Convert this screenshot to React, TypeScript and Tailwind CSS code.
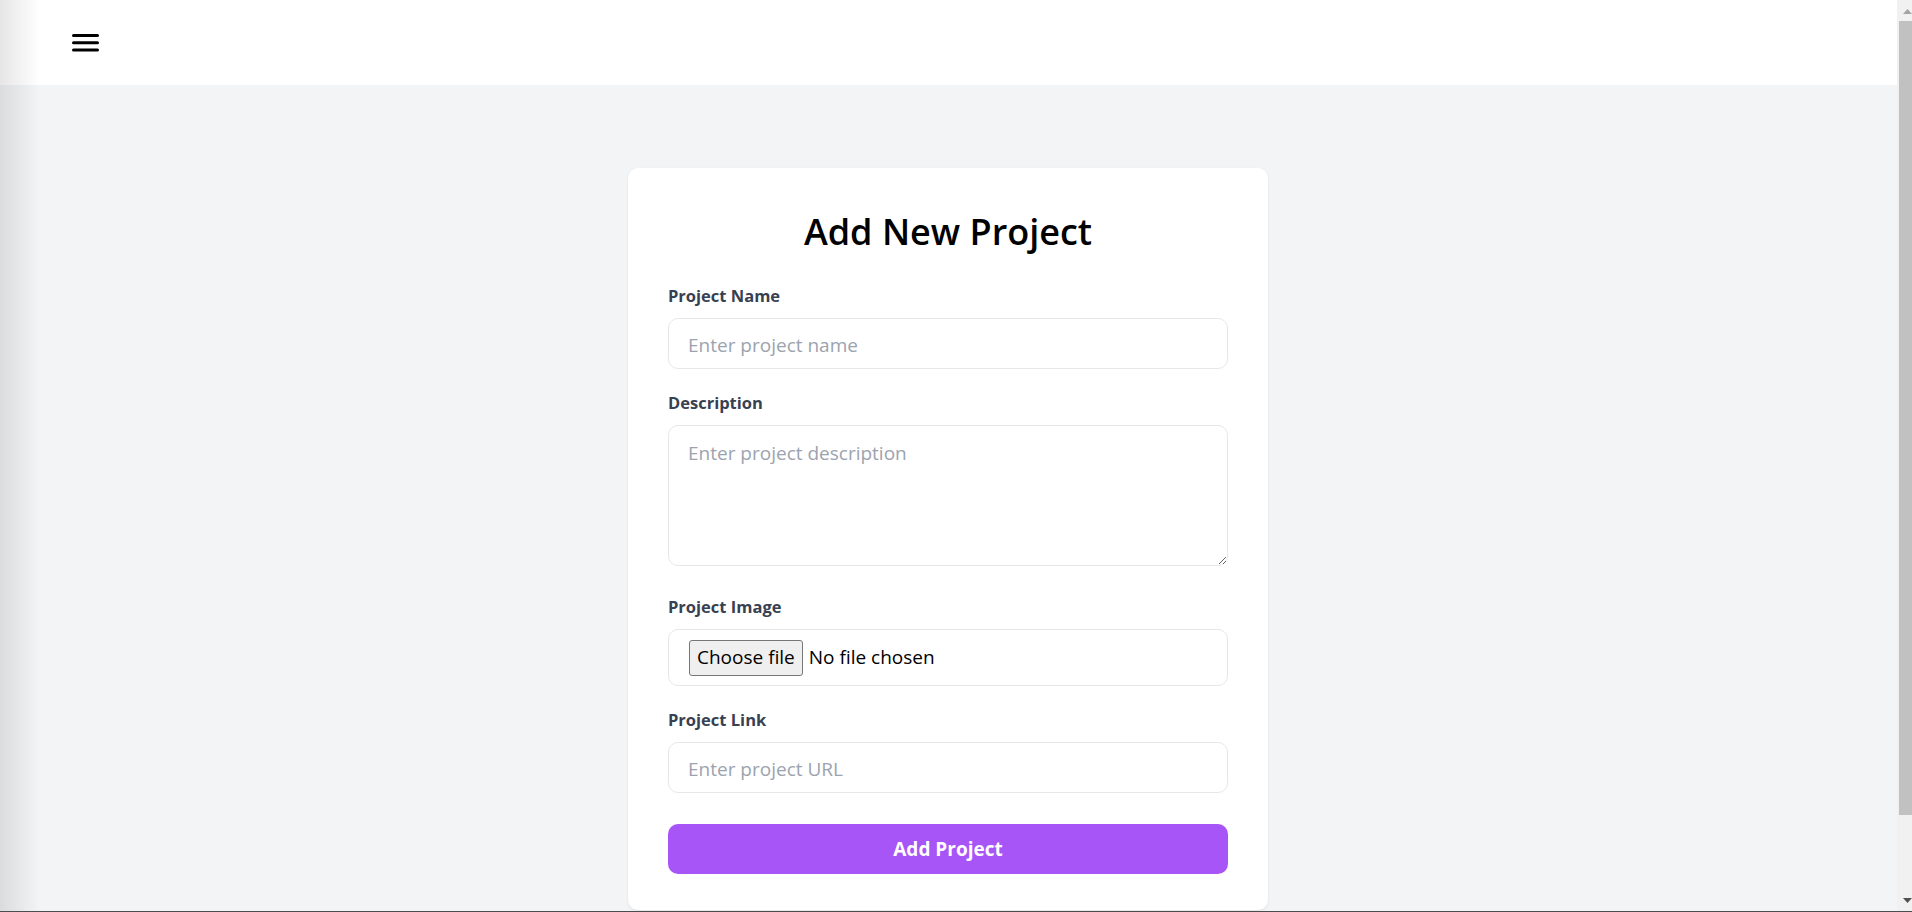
import React from "react";

function Field({ label, children, className }: { label: string; children: React.ReactNode; className?: string }) {
  return (
    <div className={className}>
      <label className="block text-[16.5px] leading-[22px] font-bold text-[#374151] mb-[11px]">{label}</label>
      {children}
    </div>
  );
}

export default function App() {
  return (
    <div className="h-[912px] w-full overflow-hidden flex flex-col font-['Open_Sans','Noto_Sans',sans-serif]">
      <div className="flex flex-1 min-h-0">
        <div className="relative flex-1 flex flex-col bg-[#f3f4f6] overflow-hidden">
          <header className="h-[85px] shrink-0 bg-white flex items-center pl-[72px]">
            <svg width="27" height="18" viewBox="0 0 27 18" fill="none">
              <path d="M1.5 1.5H25.5M1.5 8.8H25.5M1.5 16.1H25.5" stroke="#000" strokeWidth="3" strokeLinecap="round" />
            </svg>
          </header>
          <main className="flex justify-center pt-[83px] pr-[1px]">
            <form className="w-[640px] shrink-0 bg-white rounded-[10px] shadow-[0_1px_3px_rgba(0,0,0,0.08)] px-[40px] pt-[42px] pb-[36px]" onSubmit={(e) => e.preventDefault()}>
              <h1 className="text-center text-[36px] leading-[44px] font-semibold text-black mb-[31px]">Add New Project</h1>
              <Field label="Project Name">
                <input
                  type="text"
                  placeholder="Enter project name"
                  className="block w-full h-[51px] border border-[#e5e7eb] rounded-[10px] px-[19px] pt-[2px] text-[19px] placeholder:text-[#9ca3af] outline-none"
                />
              </Field>
              <Field label="Description" className="mt-[23px]">
                <textarea
                  placeholder="Enter project description"
                  className="block w-full h-[141px] border border-[#e5e7eb] rounded-[10px] px-[19px] pt-[13px] text-[19px] placeholder:text-[#9ca3af] outline-none resize-y"
                />
              </Field>
              <Field label="Project Image" className="mt-[30px]">
                <label className="h-[57px] border border-[#e5e7eb] rounded-[10px] flex items-center pl-[20px] cursor-pointer">
                  <span className="h-[36px] px-[7px] border border-[#767676] rounded-[3px] bg-[#efefef] text-[19px] text-black flex items-center">Choose file</span>
                  <span className="ml-[6px] text-[19px] text-black">No file chosen</span>
                  <input type="file" className="hidden" />
                </label>
              </Field>
              <Field label="Project Link" className="mt-[23px]">
                <input
                  type="url"
                  placeholder="Enter project URL"
                  className="block w-full h-[51px] border border-[#e5e7eb] rounded-[10px] px-[19px] pt-[2px] text-[19px] placeholder:text-[#9ca3af] outline-none"
                />
              </Field>
              <button
                type="submit"
                className="mt-[31px] w-full h-[50px] rounded-[10px] bg-[#a855f7] text-white text-[19px] font-bold flex items-center justify-center"
              >
                Add Project
              </button>
            </form>
          </main>
          <div className="pointer-events-none absolute inset-y-0 left-0 w-[40px] bg-linear-to-r from-black/10 to-transparent" />
        </div>
        <div className="w-[15px] shrink-0 bg-[#f1f1f1] flex flex-col">
          <div className="h-[21px] pt-[9px] pl-[6px]">
            <svg width="9" height="5" viewBox="0 0 9 5" className="block">
              <path d="M4.5 0L9 5H0Z" fill="#a3a3a3" />
            </svg>
          </div>
          <div className="h-[794px] ml-[2px] bg-[#c1c1c1]" />
          <div className="flex-1 flex items-end pb-[8px] pl-[6px]">
            <svg width="9" height="5" viewBox="0 0 9 5" className="block">
              <path d="M0 0H9L4.5 5Z" fill="#505050" />
            </svg>
          </div>
        </div>
      </div>
      <div className="h-px shrink-0 bg-[#4d4d4d]" />
    </div>
  );
}
